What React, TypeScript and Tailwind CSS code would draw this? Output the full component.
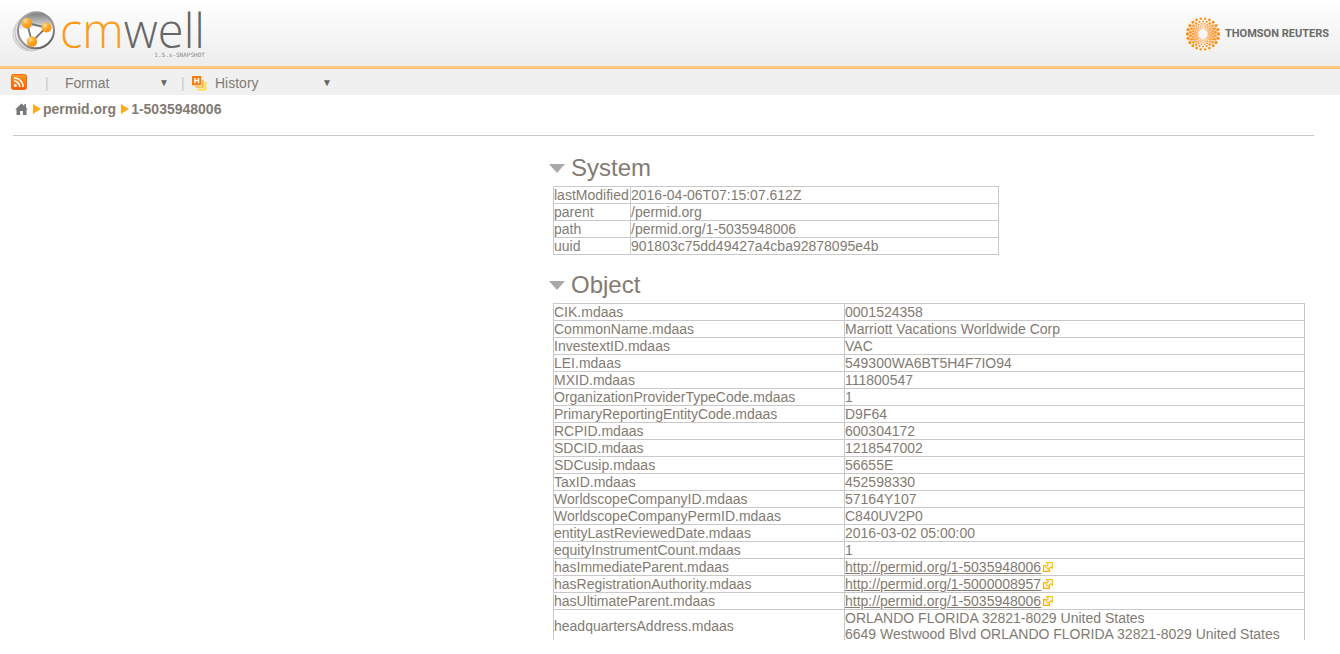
import React from "react";

const systemRows: [string, string][] = [
  ["lastModified", "2016-04-06T07:15:07.612Z"],
  ["parent", "/permid.org"],
  ["path", "/permid.org/1-5035948006"],
  ["uuid", "901803c75dd49427a4cba92878095e4b"],
];

type ObjectRow = { name: string; values: string[]; link?: boolean };

const objectRows: ObjectRow[] = [
  { name: "CIK.mdaas", values: ["0001524358"] },
  { name: "CommonName.mdaas", values: ["Marriott Vacations Worldwide Corp"] },
  { name: "InvestextID.mdaas", values: ["VAC"] },
  { name: "LEI.mdaas", values: ["549300WA6BT5H4F7IO94"] },
  { name: "MXID.mdaas", values: ["111800547"] },
  { name: "OrganizationProviderTypeCode.mdaas", values: ["1"] },
  { name: "PrimaryReportingEntityCode.mdaas", values: ["D9F64"] },
  { name: "RCPID.mdaas", values: ["600304172"] },
  { name: "SDCID.mdaas", values: ["1218547002"] },
  { name: "SDCusip.mdaas", values: ["56655E"] },
  { name: "TaxID.mdaas", values: ["452598330"] },
  { name: "WorldscopeCompanyID.mdaas", values: ["57164Y107"] },
  { name: "WorldscopeCompanyPermID.mdaas", values: ["C840UV2P0"] },
  { name: "entityLastReviewedDate.mdaas", values: ["2016-03-02 05:00:00"] },
  { name: "equityInstrumentCount.mdaas", values: ["1"] },
  { name: "hasImmediateParent.mdaas", values: ["http://permid.org/1-5035948006"], link: true },
  { name: "hasRegistrationAuthority.mdaas", values: ["http://permid.org/1-5000008957"], link: true },
  { name: "hasUltimateParent.mdaas", values: ["http://permid.org/1-5035948006"], link: true },
  {
    name: "headquartersAddress.mdaas",
    values: [
      "ORLANDO FLORIDA 32821-8029 United States",
      "6649 Westwood Blvd ORLANDO FLORIDA 32821-8029 United States",
    ],
  },
];

function DrumLogo() {
  return (
    <svg width="44" height="44" viewBox="0 0 44 44" aria-hidden="true">
      <defs>
        <linearGradient id="rim" x1="0" y1="0" x2="0.7" y2="1">
          <stop offset="0" stopColor="#c4c4c4" />
          <stop offset="0.35" stopColor="#888" />
          <stop offset="0.7" stopColor="#999" />
          <stop offset="1" stopColor="#5c5c5c" />
        </linearGradient>
        <linearGradient id="face" x1="0" y1="0" x2="0" y2="1">
          <stop offset="0" stopColor="#7b7b7b" />
          <stop offset="0.3" stopColor="#c2c2c2" />
          <stop offset="0.5" stopColor="#fff" />
          <stop offset="1" stopColor="#fff" />
        </linearGradient>
        <linearGradient id="side" x1="0" y1="0" x2="1" y2="1">
          <stop offset="0" stopColor="#eee" />
          <stop offset="0.5" stopColor="#ccc" />
          <stop offset="1" stopColor="#777" />
        </linearGradient>
        <radialGradient id="ball" cx="0.35" cy="0.3" r="0.75">
          <stop offset="0" stopColor="#ffe0a8" />
          <stop offset="0.4" stopColor="#ffb03a" />
          <stop offset="1" stopColor="#ff8c00" />
        </radialGradient>
      </defs>
      <circle cx="18.5" cy="24.5" r="17.5" fill="url(#side)" stroke="#c4c4c4" strokeWidth="0.8" />
      <circle cx="19.8" cy="23.8" r="17.8" fill="url(#side)" stroke="#f2f2f2" strokeWidth="0.8" />
      <circle cx="21" cy="23.2" r="18" fill="url(#side)" stroke="#b0b0b0" strokeWidth="0.8" />
      <circle cx="22.2" cy="22.6" r="18.2" fill="url(#side)" stroke="#eee" strokeWidth="0.8" />
      <circle cx="24" cy="21.2" r="18" fill="url(#face)" stroke="url(#rim)" strokeWidth="2" />
      <path d="M15 14 L34 18.5 L20 33 Z" fill="#fff" fillOpacity="0.6" stroke="#777" strokeWidth="1.8" />
      <circle cx="15" cy="14" r="5.2" fill="url(#ball)" />
      <circle cx="34.5" cy="18.5" r="5" fill="url(#ball)" />
      <circle cx="20" cy="32.5" r="5.2" fill="url(#ball)" />
    </svg>
  );
}

const rings = [
  { r: 15.5, size: 1.45, n: 22, opacity: 1 },
  { r: 12.6, size: 1.3, n: 22, opacity: 0.95 },
  { r: 10.2, size: 1.1, n: 22, opacity: 0.85 },
  { r: 8.2, size: 0.95, n: 22, opacity: 0.75 },
  { r: 6.5, size: 0.8, n: 22, opacity: 0.65 },
  { r: 5.2, size: 0.65, n: 22, opacity: 0.5 },
];

function DotSunburst() {
  return (
    <svg width="36" height="36" viewBox="-18 -18 36 36" aria-hidden="true">
      {rings.map((ring, k) =>
        Array.from({ length: ring.n }, (_, i) => {
          const a = ((i + (k % 2) / 2) * 2 * Math.PI) / ring.n;
          const weight = 0.75 + 0.4 * Math.abs(Math.cos(a));
          return (
            <circle
              key={`${k}-${i}`}
              cx={ring.r * Math.cos(a)}
              cy={ring.r * Math.sin(a)}
              r={ring.size * weight}
              fill="#ff8d14"
              fillOpacity={ring.opacity}
            />
          );
        })
      )}
    </svg>
  );
}

function RssIcon() {
  return (
    <svg width="16" height="16" viewBox="0 0 16 16" aria-hidden="true">
      <defs>
        <linearGradient id="rss" x1="0" y1="0" x2="0" y2="1">
          <stop offset="0" stopColor="#ff9a1c" />
          <stop offset="1" stopColor="#fa5a0c" />
        </linearGradient>
      </defs>
      <rect x="0.5" y="0.5" width="15" height="15" rx="2" fill="url(#rss)" stroke="#ef6a10" />
      <circle cx="4.4" cy="11.6" r="1.5" fill="#fff" />
      <path d="M3 7.2 A5.8 5.8 0 0 1 8.8 13 M3 3.8 A9.2 9.2 0 0 1 12.2 13" fill="none" stroke="#fff" strokeWidth="1.7" />
    </svg>
  );
}

function HistoryIcon() {
  return (
    <svg width="15" height="15" viewBox="0 0 15 15" aria-hidden="true">
      <path d="M12.2 6 H14.5 V14.5 H5.5 V12.5 H12.2 Z" fill="#ffdc4a" />
      <path d="M9.7 3.5 H12 V12 H3 V10 H9.7 Z" fill="#ffb42e" stroke="#f0f0f0" strokeWidth="0.6" />
      <rect x="0" y="0" width="9.3" height="9.3" fill="#fb7d0c" />
      <path d="M2.8 2 V7.3 M6.5 2 V7.3 M2.8 4.6 H6.5" stroke="#fff" strokeWidth="1.5" fill="none" />
    </svg>
  );
}

function HomeIcon() {
  return (
    <svg width="13" height="12" viewBox="0 0 13 12" aria-hidden="true">
      <path d="M6.5 0.5 L9.3 3 V1 H11 V4.6 L12.8 6.5 H11.5 V12 H7.9 V8 H5.1 V12 H1.5 V6.5 H0.2 Z" fill="#777" />
    </svg>
  );
}

function Chevron() {
  return (
    <svg width="8" height="10" viewBox="0 0 8 10" aria-hidden="true">
      <path d="M0 0 L8 5 L0 10 Z" fill="#ffab1f" />
    </svg>
  );
}

function ExternalIcon() {
  return (
    <svg width="10" height="10" viewBox="0 0 10 10" aria-hidden="true">
      <path d="M3 3.6 H0.6 V9.4 H6.4 V7" fill="none" stroke="#ffa91c" strokeWidth="1.2" />
      <path d="M3.6 0.6 H9.4 V6.2 L7.8 4.9 L5.2 7.2 L2.9 5 L5.2 2.4 Z" fill="#fff" stroke="#ffc40a" strokeWidth="1.2" />
    </svg>
  );
}

function MenuSelect({ label, width }: { label: string; width: string }) {
  return (
    <div className={`grid items-center ${width}`}>
      <select
        aria-label={label}
        className="col-start-1 row-start-1 w-full appearance-none bg-transparent text-sm leading-5 text-[#837b72] outline-none"
      >
        <option>{label}</option>
      </select>
      <span className="pointer-events-none col-start-1 row-start-1 justify-self-end text-[10px] leading-5 text-[#666]">
        ▼
      </span>
    </div>
  );
}

function Section({ title, children }: { title: string; children: React.ReactNode }) {
  return (
    <section>
      <h2 className="text-2xl leading-8">
        <button type="button" className="flex h-8 items-center gap-1.5 pb-1">
          <svg width="16" height="9" viewBox="0 0 16 9" aria-hidden="true">
            <path d="M0 0 H16 L8 9 Z" fill="#a9a9a9" />
          </svg>
          {title}
        </button>
      </h2>
      {children}
    </section>
  );
}

const cell = "border border-[#c9c9c9] p-0 text-left align-middle font-normal";

export default function App() {
  return (
    <div className="flex h-screen flex-col bg-white pb-3.5 font-['Liberation_Sans',Arial,sans-serif] text-sm text-[#837b72]">
      <header className="flex h-[69px] shrink-0 items-start justify-between border-b-3 border-[#ffc87c] bg-linear-to-b from-white to-[#ededed] pr-[11px] pl-3">
        <a href="#home" className="flex gap-1 pt-[9px]">
          <DrumLogo />
          <span className="flex flex-col items-end font-['Open_Sans',sans-serif]">
            <span className="h-[42px] text-[47px] leading-[42px] font-light text-[#666]">
              <span className="text-[#ff9a16]">cm</span>well
            </span>
            <span className="font-['DejaVu_Sans_Mono',monospace] text-[6px] leading-[8px] text-[#888]">
              1.5.x-SNAPSHOT
            </span>
          </span>
        </a>
        <a href="#thomson-reuters" className="flex items-center gap-1 pt-4">
          <DotSunburst />
          <span className="font-['Roboto',sans-serif] text-[11px] font-bold whitespace-nowrap text-[#6a6a6a]">
            THOMSON REUTERS
          </span>
        </a>
      </header>

      <nav className="flex h-[26px] shrink-0 items-center bg-[#f0f0f0] pl-[11px]">
        <a href="#feed" aria-label="RSS feed" className="w-[34px]">
          <RssIcon />
        </a>
        <div className="flex items-center pt-0.5">
          <span className="w-5 text-[#c9c9c9]">|</span>
          <MenuSelect label="Format" width="w-[104px]" />
          <span className="w-[23px] pl-3 text-[#c9c9c9]">|</span>
          <span className="w-[23px]">
            <HistoryIcon />
          </span>
          <MenuSelect label="History" width="w-[117px]" />
        </div>
      </nav>

      <main className="min-h-0 flex-1 overflow-hidden">
        <div className="mr-[26px] ml-[13px] flex h-[41px] items-start gap-[5px] border-b border-[#c9c9c9] pt-1 pl-0.5 leading-5 font-bold">
          <a href="#root" aria-label="Home" className="flex h-5 items-center">
            <HomeIcon />
          </a>
          <span className="flex h-5 items-center gap-0.5">
            <Chevron />
            <a href="#permid">permid.org</a>
          </span>
          <span className="flex h-5 items-center gap-0.5">
            <Chevron />
            <a href="#entity">1-5035948006</a>
          </span>
        </div>

        <div className="flex flex-col gap-4 pt-[18px] pr-[35px] pl-[549px]">
          <Section title="System">
            <table className="ml-1 w-[446px] border-collapse leading-4">
              <tbody>
                {systemRows.map(([name, value]) => (
                  <tr key={name}>
                    <th scope="row" className={`${cell} w-[77px]`}>
                      {name}
                    </th>
                    <td className={cell}>{value}</td>
                  </tr>
                ))}
              </tbody>
            </table>
          </Section>

          <Section title="Object">
            <div className="pl-1">
              <table className="w-full border-collapse leading-4">
                <tbody>
                  {objectRows.map((row) => (
                    <tr key={row.name}>
                      <th scope="row" className={`${cell} w-[291px]`}>
                        {row.name}
                      </th>
                      <td className={cell}>
                        {row.values.map((value) =>
                          row.link ? (
                            <div key={value} className="flex items-center gap-0.5">
                              <a href={value} className="underline">
                                {value}
                              </a>
                              <ExternalIcon />
                            </div>
                          ) : (
                            <div key={value}>{value}</div>
                          )
                        )}
                      </td>
                    </tr>
                  ))}
                </tbody>
              </table>
            </div>
          </Section>
        </div>
      </main>
    </div>
  );
}
